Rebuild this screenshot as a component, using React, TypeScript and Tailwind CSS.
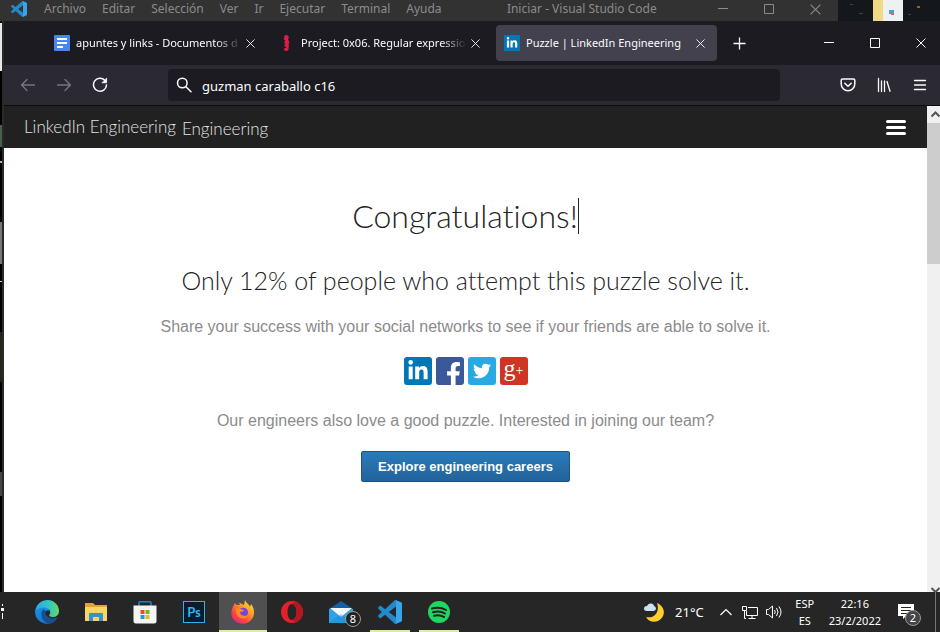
import type { ReactNode } from "react";
import { FaFacebookF, FaLinkedinIn, FaTwitter } from "react-icons/fa";

const ui = "font-['Noto_Sans','Open_Sans',sans-serif]";
const display = "font-['Lato',sans-serif] font-light [font-variant-ligatures:none]";

function CodeLogo({ className }: { className: string }) {
  return (
    <svg viewBox="0 0 24 24" className={className} aria-hidden="true">
      <path fill="#2489ca" fillRule="evenodd" d="M23.15 2.587L18.21.21a1.494 1.494 0 0 0-1.705.29l-9.46 8.63-4.12-3.128a.999.999 0 0 0-1.276.057L.327 7.261A1 1 0 0 0 .326 8.74L3.899 12 .326 15.26a1 1 0 0 0 .001 1.479L1.65 17.94a.999.999 0 0 0 1.276.057l4.12-3.128 9.46 8.63a1.492 1.492 0 0 0 1.704.29l4.942-2.377A1.5 1.5 0 0 0 24 20.06V3.939a1.5 1.5 0 0 0-.85-1.352zm-5.146 14.861L10.826 12l7.178-5.448v10.896z" />
      <path fill="#36a5ec" d="M18 .2l5.2 2.4q.8.4.8 1.4v16q0 1-.8 1.4L18 23.8z" />
    </svg>
  );
}

function CrossIcon({ className }: { className: string }) {
  return (
    <svg viewBox="0 0 10 10" className={className} fill="none" stroke="currentColor" aria-hidden="true">
      <path d="M.5.5l9 9M9.5.5l-9 9" />
    </svg>
  );
}

function MinimizeIcon() {
  return (
    <svg viewBox="0 0 10 10" className="h-[10px] w-[10px]" stroke="currentColor" aria-hidden="true">
      <path d="M0 4.5h10" />
    </svg>
  );
}

function MaximizeIcon() {
  return (
    <svg viewBox="0 0 10 10" className="h-[10px] w-[10px]" fill="none" stroke="currentColor" aria-hidden="true">
      <path d="M.5.5h9v9h-9z" />
    </svg>
  );
}

function EditorTitleBar() {
  const menus = ["Archivo", "Editar", "Selección", "Ver", "Ir", "Ejecutar", "Terminal", "Ayuda"];
  return (
    <header className={`${ui} flex h-[21px] shrink-0 overflow-hidden bg-[#0d0f13] text-xs leading-4 text-[#8b8b8b]`}>
      <div className="flex min-w-0 flex-1 items-center bg-[#323233] pb-[3px] pl-[11px]">
        <CodeLogo className="h-4 w-4 shrink-0" />
        <nav className="ml-[17px] flex gap-4">
          {menus.map((m) => (
            <button key={m} type="button">{m}</button>
          ))}
        </nav>
        <span className="flex-1 truncate pl-2 text-center">Iniciar - Visual Studio Code</span>
        <div className="flex gap-[34px] pr-4 pl-1">
          <button type="button" aria-label="Minimizar editor" className="w-3"><MinimizeIcon /></button>
          <button type="button" aria-label="Maximizar editor" className="w-3"><MaximizeIcon /></button>
          <button type="button" aria-label="Cerrar editor" className="w-3"><CrossIcon className="h-[11px] w-[11px]" /></button>
        </div>
      </div>
      <svg viewBox="0 0 102 21" className="h-[21px] w-[102px] shrink-0" aria-hidden="true">
        <path fill="#14171c" d="M0 0h102v21H0z" />
        <path stroke="#3b4148" d="M12 4.500h3M21 13.500h4M70 14.500h3" />
        <path fill="#f2d984" d="M35 0h10v21H35z" />
        <path fill="#eef0f2" d="M45 0h20v21H45z" />
        <path fill="#4c9fd0" d="M51 10h5v4h-5z" />
        <path fill="#cf6d52" d="M53 13h3v2h-3z" />
        <path fill="#9b5a34" d="M79 6h3v2h-3z" />
      </svg>
    </header>
  );
}

function LinkedInMark() {
  return (
    <span className="flex h-4 w-4 items-center justify-center bg-[#0277b5] text-white">
      <FaLinkedinIn className="h-3 w-3" />
    </span>
  );
}

function DocsMark() {
  return (
    <svg viewBox="0 0 16 16" className="h-4 w-4" aria-hidden="true">
      <rect width="16" height="16" rx="1" fill="#4a86f0" />
      <path d="M3 4h10M3 8h10M3 12h6" stroke="#fff" strokeWidth="2" />
    </svg>
  );
}

function SeahorseMark() {
  return (
    <svg viewBox="0 0 16 16" className="h-4 w-4" aria-hidden="true">
      <path fill="#dc1e46" d="M6 .3L8 0l1.600 1.200.2 1.900-.8 1.700 1 1.400.3 2-1 1.300.9 1.500-.8 1.800.2 2L8 16l-2.200-.3-1-1.500.7-1.200 1.500.3.100-1.200-1.600-.9-.2-1.200 1.200-1-1.200-1 .2-1.500.900-1L5 4.800 4.600 3.700l1-.9L4.800 2z" />
    </svg>
  );
}

function Tab({ icon, title, active = false }: { icon: ReactNode; title: string; active?: boolean }) {
  return (
    <div className={`flex h-9 w-[221px] min-w-0 items-center rounded pr-3 pl-2 ${active ? "bg-[#42414d]" : ""}`}>
      <span className="mr-[6px] shrink-0">{icon}</span>
      <button
        type="button"
        role="tab"
        aria-selected={active}
        className={`min-w-0 flex-1 text-left whitespace-nowrap ${active ? "" : "[mask-image:linear-gradient(to_right,black_84%,transparent)]"}`}
      >
        {title}
      </button>
      <button type="button" aria-label={`Cerrar ${title}`} className="ml-1 shrink-0"><CrossIcon className="h-[9px] w-[9px]" /></button>
    </div>
  );
}

function TabStrip() {
  return (
    <div className={`${ui} flex h-11 items-center bg-[#1c1b22] pr-[14px] pl-[42px] text-[11px] leading-4 text-[#fbfbfe]`}>
      <div role="tablist" className="flex min-w-0 gap-1">
        <Tab icon={<DocsMark />} title="apuntes y links - Documentos d" />
        <Tab icon={<SeahorseMark />} title="Project: 0x06. Regular expressio" />
        <Tab icon={<LinkedInMark />} title="Puzzle | LinkedIn Engineering" active />
      </div>
      <button type="button" aria-label="Nueva pestaña" className="ml-4">
        <svg viewBox="0 0 13 13" className="h-[13px] w-[13px]" stroke="currentColor" strokeWidth="1.300" aria-hidden="true"><path d="M6.500 .5v12M.5 6.500h12" /></svg>
      </button>
      <div className="ml-auto flex gap-9">
        <button type="button" aria-label="Minimizar"><MinimizeIcon /></button>
        <button type="button" aria-label="Maximizar"><MaximizeIcon /></button>
        <button type="button" aria-label="Cerrar"><CrossIcon className="h-[10px] w-[10px]" /></button>
      </div>
    </div>
  );
}

function Toolbar() {
  const stroke = { fill: "none", stroke: "currentColor", strokeWidth: 1.3, strokeLinecap: "round", strokeLinejoin: "round" } as const;
  return (
    <div className={`${ui} flex h-[41px] items-center border-b border-[#0c0c0d] bg-[#2b2a33] pr-3 pl-4 text-[#fbfbfe]`}>
      <div className="flex gap-5">
        <button type="button" aria-label="Atrás" className="text-[#77767e]">
          <svg viewBox="0 0 16 16" className="h-4 w-4" {...stroke}><path d="M14.500 8H1.500M7 2.500L1.500 8 7 13.500" /></svg>
        </button>
        <button type="button" aria-label="Adelante" className="text-[#77767e]">
          <svg viewBox="0 0 16 16" className="h-4 w-4" {...stroke}><path d="M1.500 8h13M9 2.500L14.500 8 9 13.500" /></svg>
        </button>
        <button type="button" aria-label="Recargar">
          <svg viewBox="0 0 16 16" className="h-4 w-4" {...stroke} strokeWidth="1.500"><path d="M12.800 3.300A6.500 6.500 0 1 0 14.500 8" /><path d="M14.600 1.500v4.300h-4.300z" fill="currentColor" strokeWidth=".8" /></svg>
        </button>
      </div>
      <label className="mr-[60px] ml-[60px] flex h-8 flex-1 items-center rounded bg-[#1c1b22] pl-2">
        <svg viewBox="0 0 16 16" className="h-4 w-4 shrink-0" {...stroke} strokeWidth="1.500" aria-hidden="true"><circle cx="6.300" cy="6" r="4.800" /><path d="M10 9.800l5 5" /></svg>
        <input aria-label="Buscar o escribir dirección" defaultValue="guzman caraballo c16" className="ml-[10px] min-w-0 flex-1 bg-transparent pt-px text-[13px] leading-5 outline-none" />
      </label>
      <div className="flex gap-5">
        <button type="button" aria-label="Guardar en Pocket">
          <svg viewBox="0 0 16 16" className="h-4 w-4" {...stroke} strokeWidth="1.500"><path d="M2.500 2h11q1.300 0 1.300 1.300V7a6.800 6.800 0 0 1-13.600 0V3.300Q1.200 2 2.500 2z" /><path d="M4.800 6.300L8 9.300l3.200-3" /></svg>
        </button>
        <button type="button" aria-label="Biblioteca">
          <svg viewBox="0 0 16 16" className="h-4 w-4" {...stroke}><path d="M2.500 1.500v13M5.500 4v10.500M8.500 4v10.500M11 4.500l3 9.800" /></svg>
        </button>
        <button type="button" aria-label="Menú de la aplicación">
          <svg viewBox="0 0 16 16" className="h-4 w-4" {...stroke}><path d="M2.500 3.500h11M2.500 8h11M2.500 12.500h11" /></svg>
        </button>
      </div>
    </div>
  );
}

function ShareLinks() {
  const tile = "flex h-7 w-7 items-center justify-center overflow-hidden rounded-[3px] text-white";
  return (
    <div className="mt-[18px] flex justify-center gap-1">
      <a href="#linkedin" aria-label="LinkedIn" className={`${tile} bg-[#0077b5]`}><FaLinkedinIn className="h-[22px] w-[22px]" /></a>
      <a href="#facebook" aria-label="Facebook" className={`${tile} bg-[#3b5998]`}><FaFacebookF className="mt-[5px] ml-[7px] h-6 w-6" /></a>
      <a href="#twitter" aria-label="Twitter" className={`${tile} bg-[#29a9e1]`}><FaTwitter className="h-[18px] w-[18px]" /></a>
      <a href="#googleplus" aria-label="Google+" className={`${tile} bg-[#d03425] font-['Liberation_Serif',serif] text-2xl leading-6`}>
        <span className="pb-[6px]">g</span><span className="text-sm leading-4">+</span>
      </a>
    </div>
  );
}

function WebPage() {
  return (
    <div className="flex min-w-0 flex-1 flex-col bg-white">
      <nav className={`${display} flex h-[42px] items-start bg-[#212121] pr-[21px] pl-5 text-[17px] leading-5 text-[#e2e2e2]`}>
        <a href="#home" className="mt-[11px]">LinkedIn Engineering</a>
        <a href="#engineering" className="mt-[13px] ml-[6px]">Engineering</a>
        <button type="button" aria-label="Menu" className="mt-[14px] ml-auto flex flex-col gap-[3px]">
          <span className="h-[3px] w-5 rounded-sm bg-white" />
          <span className="h-[3px] w-5 rounded-sm bg-white" />
          <span className="h-[3px] w-5 rounded-sm bg-white" />
        </button>
      </nav>
      <main className="flex-1 pt-[50px] text-center font-['Liberation_Sans',Arial,sans-serif] text-base leading-6 text-[#8b8b8b]">
        <h1 className={`${display} flex items-center justify-center text-[32px] leading-9 text-[#222]`}>
          Congratulations!<span className="h-9 w-px bg-[#222]" />
        </h1>
        <h2 className={`${display} mt-[30px] text-[25px] leading-8 text-[#222]`}>Only 12% of people who attempt this puzzle solve it.</h2>
        <p className="mt-[19px]">Share your success with your social networks to see if your friends are able to solve it.</p>
        <ShareLinks />
        <p className="mt-6">Our engineers also love a good puzzle. Interested in joining our team?</p>
        <a href="#careers" className="mt-[18px] inline-block rounded-[2px] border border-[#1b5480] bg-linear-to-b from-[#287bbc] to-[#23639a] px-4 text-[13px] leading-[29px] font-bold text-white">
          Explore engineering careers
        </a>
      </main>
    </div>
  );
}

function Scrollbar() {
  return (
    <div className="flex w-[13px] shrink-0 flex-col justify-between overflow-hidden bg-[#f0f0f0]">
      <div>
        <svg viewBox="0 0 13 17" className="h-[17px] w-[13px]" fill="none" stroke="#555" strokeWidth="2" aria-hidden="true"><path d="M4.500 10.500l4-4 4 4" /></svg>
        <div className="h-[141px] bg-[#cdcdcd]" />
      </div>
      <svg viewBox="0 0 13 5" className="h-[5px] w-[13px]" fill="none" stroke="#555" strokeWidth="2" aria-hidden="true"><path d="M4.500 1l4 4 4-4" /></svg>
    </div>
  );
}

function WindowEdge() {
  return (
    <div className="flex w-1 shrink-0 flex-col border-r-2 border-[#292929] bg-black">
      <div className="mt-[2px] h-[48px] bg-[#e8e8e8]" />
      <div className="mt-[54px] h-[22px] bg-[#496049]" />
      <div className="mt-[14px] h-[2px] bg-[#9ebbb8]" />
      <div className="mt-[59px] h-[42px] bg-[#777]" />
      <div className="mt-[17px] h-px bg-[#ccc]" />
      <div className="mt-[50px] h-[50px] bg-[#262418]" />
      <div className="mt-[90px] h-[24px] bg-[#444]" />
    </div>
  );
}

function EdgeLogo() {
  return (
    <svg viewBox="0 0 24 24" className="h-6 w-6" aria-hidden="true">
      <defs>
        <linearGradient id="edge-top" x1="0" x2="1"><stop stopColor="#28a9e8" /><stop offset=".6" stopColor="#35c7c3" /><stop offset="1" stopColor="#66dc5b" /></linearGradient>
        <linearGradient id="edge-low" x2="0" y2="1"><stop stopColor="#1592dd" /><stop offset="1" stopColor="#1b78d0" /></linearGradient>
      </defs>
      <path fill="url(#edge-low)" d="M.2 11C1 8 4 6.500 8 6.500c4 0 6 2 6 4.500-2-1-4 0-4.500 2-1 5 5 8 13 4.500A12 12 0 0 1 0 13z" />
      <path fill="#174f91" d="M9 9c-4 2-4 11 4 14.900A12 12 0 0 0 22.500 17.500C17 20 10 17 10.500 12z" />
      <path fill="url(#edge-top)" d="M.2 11C1.500 3.500 7 0 12.500 0 20 0 24 6 24 11c0 4-3 6-6.500 6-3 0-4-1.400-3-2.500 2-2.500 0-6.500-5-7C5.500 7.200 2 8.500.2 11z" />
    </svg>
  );
}

function FolderLogo() {
  return (
    <svg viewBox="0 0 22 20" className="h-5 w-[22px]" aria-hidden="true">
      <path fill="#e3a62b" d="M0 1h8l2 2h12v6H0z" />
      <path fill="#fbd36b" d="M0 5h22v14H0z" />
      <path fill="#3b8ed0" d="M4 19v-7q0-1 1-1h12q1 0 1 1v7h-4v-4H8v4z" />
    </svg>
  );
}

function StoreLogo() {
  return (
    <svg viewBox="0 0 24 24" className="h-6 w-6" aria-hidden="true">
      <path fill="none" stroke="#1d83bf" strokeWidth="1.600" d="M6 6V2.500Q6 1.800 6.700 1.800h10.600q.7 0 .7.700V6" />
      <path fill="#f4f4f4" d="M.5 5.500h23V21q0 2.500-2.500 2.500H3Q.5 23.500.5 21z" />
      <path fill="#e5502b" d="M7.500 10h4v4h-4z" /><path fill="#72b52c" d="M12.500 10h4v4h-4z" />
      <path fill="#1e9bdc" d="M7.500 15h4v4h-4z" /><path fill="#f5b51d" d="M12.500 15h4v4h-4z" />
    </svg>
  );
}

function FirefoxLogo() {
  return (
    <svg viewBox="0 0 24 24" className="h-6 w-6" aria-hidden="true">
      <defs><linearGradient id="fox" x1="1" y1="0" x2=".2" y2="1"><stop stopColor="#fff04a" /><stop offset=".35" stopColor="#ffad24" /><stop offset=".7" stopColor="#ff4d37" /><stop offset="1" stopColor="#e42286" /></linearGradient></defs>
      <path fill="url(#fox)" d="M3 5l1-2 1.500 2L9 5l-1-2.500L13 5l1-5c1 3 4 4 5 7l1-3c4 5 4 12 0 16-4 5-12 5-17 0C-1 16 0 9 3 5z" />
      <circle cx="12.200" cy="12.500" r="4.800" fill="#7542e5" />
      <path fill="#ff8a22" d="M5 8l5 1 3 1-1 1.500-3 .5 1 3 4 1 3-1c-1 3-4 4-7 3-4-1-6-5-5-10z" />
    </svg>
  );
}

function OperaLogo() {
  return (
    <svg viewBox="0 0 24 24" className="h-6 w-6" aria-hidden="true">
      <path fill="#e5202b" fillRule="evenodd" d="M12 1a11 11 0 1 0 0 22 11 11 0 0 0 0-22zm0 3c3 0 4.500 3.800 4.500 8s-1.500 8-4.500 8-4.500-3.800-4.500-8S9 4 12 4z" />
      <path fill="#b81522" d="M12 4c2-2 4-2 6-1 3 2 5 5 5 9s-2 7-5 9c-2 1-4 1-6-1 3 0 4.500-3.800 4.500-8S15 4 12 4z" />
    </svg>
  );
}

function MailLogo() {
  return (
    <span className="relative">
      <svg viewBox="0 0 24 24" className="h-6 w-6" aria-hidden="true">
        <path fill="#1261a6" d="M0 9l12-8 12 8v3H0z" />
        <path fill="#2ba3e5" d="M0 9h24v14H0z" />
        <path fill="#f4f8fb" d="M1 8h22l-11 9z" />
        <path fill="#1482ce" d="M0 23l12-9 12 9z" opacity=".35" />
      </svg>
      <span className="absolute top-[11px] left-4 flex h-4 w-4 items-center justify-center rounded-full border border-[#999] bg-[#222] leading-3 text-white">8</span>
    </span>
  );
}

function SpotifyLogo() {
  return (
    <svg viewBox="0 0 24 24" className="h-6 w-6" aria-hidden="true">
      <circle cx="12" cy="12" r="11" fill="#1ed760" />
      <path d="M5 8.500q8-2 14 1.500M6 12.200q7-1.700 12 1.300M7 15.700q5.500-1.400 10 1.200" fill="none" stroke="#202020" strokeWidth="2" strokeLinecap="round" />
    </svg>
  );
}

function TaskButton({ label, state = "idle", children }: { label: string; state?: "idle" | "open" | "active"; children: ReactNode }) {
  return (
    <button type="button" aria-label={label} className={`flex h-10 w-12 shrink-0 flex-col items-center ${state === "active" ? "bg-[#505050]" : ""}`}>
      <span className="flex flex-1 items-center justify-center pt-px">{children}</span>
      <span className={`h-[2px] ${state === "active" ? "w-12 bg-[#d8f0a0]" : state === "open" ? "w-10 bg-[#d8f0a0]" : "w-10"}`} />
    </button>
  );
}

function Taskbar() {
  return (
    <footer className={`${ui} flex h-10 shrink-0 items-center bg-[#262626] text-[11px] leading-4 text-white`}>
      <svg viewBox="0 0 23 40" className="h-10 w-[23px] shrink-0" stroke="#fff" aria-hidden="true"><path d="M2.500 12v2M2.500 21v6" /><path strokeWidth="3" d="M1 17.500h3" /></svg>
      <div className="flex gap-px">
        <TaskButton label="Microsoft Edge"><EdgeLogo /></TaskButton>
        <TaskButton label="Explorador de archivos"><FolderLogo /></TaskButton>
        <TaskButton label="Microsoft Store"><StoreLogo /></TaskButton>
        <TaskButton label="Photoshop">
          <span className="flex h-[22px] w-[22px] items-center justify-center border border-[#34aeea] bg-[#071c2e] font-['Lato',sans-serif] text-[13px] leading-4 font-bold text-[#35b2ee]">Ps</span>
        </TaskButton>
        <TaskButton label="Firefox" state="active"><FirefoxLogo /></TaskButton>
        <TaskButton label="Opera"><OperaLogo /></TaskButton>
        <TaskButton label="Correo"><MailLogo /></TaskButton>
        <TaskButton label="Visual Studio Code" state="open"><CodeLogo className="h-6 w-6" /></TaskButton>
        <TaskButton label="Spotify" state="open"><SpotifyLogo /></TaskButton>
      </div>
      <div className="ml-auto flex h-10 items-center">
        <button type="button" className="flex items-center gap-[10px] text-[13px]">
          <svg viewBox="0 0 21 21" className="h-[21px] w-[21px]" aria-hidden="true">
            <path fill="#fbcf2d" d="M13 1c9 4 9 14 1 18-5 2-10 0-12-4 9 2 14-6 11-14z" />
            <path fill="#c9e2f7" d="M3 9Q0 9 0 6.500T3 4q1-3 4-2.500T10 4q2 .5 2 2.500T9.500 9z" />
          </svg>
          21°C
        </button>
        <button type="button" aria-label="Mostrar iconos ocultos" className="ml-4">
          <svg viewBox="0 0 12 12" className="h-3 w-3" fill="none" stroke="#fff" strokeWidth="1.200"><path d="M.5 9L6 3.500 11.500 9" /></svg>
        </button>
        <button type="button" aria-label="Red" className="ml-[10px]">
          <svg viewBox="0 0 16 16" className="h-4 w-4" fill="none" stroke="#fff"><path d="M6 3.500h9.500v8H4.500V7M10 11.500v3M6.500 14.500h7M.5 2.500h4v4h-4zM2.500 6.500v8H4" /></svg>
        </button>
        <button type="button" aria-label="Volumen" className="ml-2">
          <svg viewBox="0 0 17 16" className="h-4 w-[17px]" fill="none" stroke="#fff"><path d="M.5 5.500h2l4-3.500v12l-4-3.500h-2zM8.500 6q1.500 2 0 4M10.500 4q3 4 0 8M13 2.500q4 5.500 0 11" /></svg>
        </button>
        <button type="button" className="ml-[10px] w-6 text-center leading-[17px]">ESP<br />ES</button>
        <time dateTime="2022-02-23T22:16" className="ml-3 text-center leading-[17px]">22:16<br />23/2/2022</time>
        <button type="button" aria-label="2 notificaciones" className="relative mr-[18px] ml-4">
          <svg viewBox="0 0 20 22" className="h-[22px] w-5"><path fill="#fff" d="M1 3h16v12H9l-3 3v-3H1z" /><path stroke="#262626" d="M4 6.500h10M4 9.500h10M4 12.500h6" /></svg>
          <span className="absolute top-[9px] left-2 flex h-4 w-4 items-center justify-center rounded-full border border-[#999] bg-[#444] leading-3">2</span>
        </button>
        <span className="mr-1 h-10 w-px bg-[#777]" />
      </div>
    </footer>
  );
}

export default function App() {
  return (
    <div className="flex min-h-screen flex-col bg-[#212121]">
      <EditorTitleBar />
      <div className="flex flex-1">
        <WindowEdge />
        <section className="flex min-w-0 flex-1 flex-col">
          <TabStrip />
          <Toolbar />
          <div className="flex flex-1">
            <WebPage />
            <Scrollbar />
          </div>
        </section>
      </div>
      <Taskbar />
    </div>
  );
}
